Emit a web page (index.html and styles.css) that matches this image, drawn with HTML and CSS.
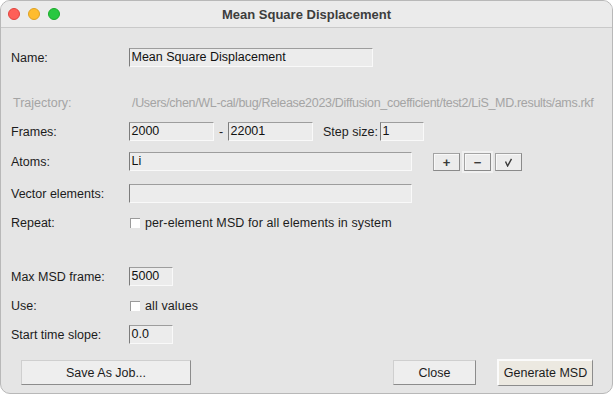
FILE: index.html
```html
<!DOCTYPE html>
<html>
<head>
<meta charset="utf-8">
<title>Mean Square Displacement</title>
<link rel="stylesheet" href="styles.css">
</head>
<body>
<div class="window">
  <div class="titlebar">
    <div class="lights">
      <span class="light red"></span>
      <span class="light yellow"></span>
      <span class="light green"></span>
    </div>
    <div class="title">Mean Square Displacement</div>
    <div></div>
  </div>
  <div class="content">
    <div class="row r-name">
      <div class="label">Name:</div>
      <div class="entry w-name">Mean Square Displacement</div>
    </div>
    <div class="row r-traj">
      <div class="label dim traj-label">Trajectory:</div>
      <div class="dim path">/Users/chen/WL-cal/bug/Release2023/Diffusion_coefficient/test2/LiS_MD.results/ams.rkf</div>
    </div>
    <div class="row r-frames">
      <div class="label">Frames:</div>
      <div class="entry w-frame">2000</div>
      <span class="dash">-</span>
      <div class="entry w-frame">22001</div>
      <span class="step">Step size:</span>
      <div class="entry w-small step-entry">1</div>
    </div>
    <div class="row r-atoms">
      <div class="label">Atoms:</div>
      <div class="entry w-wide">Li</div>
      <div class="tools">
        <div class="tbtn">+</div>
        <div class="tbtn focus">&minus;</div>
        <div class="tbtn"><svg width="9" height="9" viewBox="0 0 9 9"><path d="M1.5 3.5 L3.6 8 L7.5 0.8" fill="none" stroke="#3a3a3a" stroke-width="1.4"/></svg></div>
      </div>
    </div>
    <div class="row r-vector">
      <div class="label">Vector elements:</div>
      <div class="entry w-wide"></div>
    </div>
    <div class="row r-repeat">
      <div class="label">Repeat:</div>
      <span class="check"></span>
      <span class="check-text">per-element MSD for all elements in system</span>
    </div>
    <div class="row r-max">
      <div class="label">Max MSD frame:</div>
      <div class="entry w-small">5000</div>
    </div>
    <div class="row r-use">
      <div class="label">Use:</div>
      <span class="check"></span>
      <span class="check-text">all values</span>
    </div>
    <div class="row r-start">
      <div class="label">Start time slope:</div>
      <div class="entry w-small">0.0</div>
    </div>
    <div class="buttons">
      <div class="btn save">Save As Job...</div>
      <div class="right-btns">
        <div class="btn close">Close</div>
        <div class="btn generate">Generate MSD</div>
      </div>
    </div>
  </div>
</div>
</body>
</html>
```

FILE: styles.css
```css
html, body {
  margin: 0;
  padding: 0;
  background: #ffffff;
}
body {
  font-family: "Liberation Sans", Arial, Helvetica, sans-serif;
  font-size: 12.5px;
  color: #1c1c1c;
}
.window {
  width: 613px;
  height: 394px;
  box-sizing: border-box;
  border: 1px solid #b8b8b8;
  border-radius: 10px;
  overflow: hidden;
  background: #e5e5e5;
  display: flex;
  flex-direction: column;
}
.titlebar {
  height: 26px;
  background: #ebebeb;
  border-bottom: 1px solid #c9c9c9;
  display: grid;
  grid-template-columns: 1fr auto 1fr;
  align-items: center;
}
.lights {
  display: flex;
  gap: 8px;
  padding-left: 7px;
}
.light {
  width: 12px;
  height: 12px;
  border-radius: 50%;
  box-sizing: border-box;
}
.red { background: #fe5f57; border: 0.5px solid #e0443e; }
.yellow { background: #febc2e; border: 0.5px solid #dea123; }
.green { background: #28c840; border: 0.5px solid #1aab29; }
.title {
  font-weight: bold;
  font-size: 13px;
  color: #3d3d3d;
}
.content {
  flex: 1;
  display: flex;
  flex-direction: column;
  padding: 20px 0 0 10px;
}
.row {
  display: flex;
  align-items: center;
  height: 19px;
  margin-bottom: 10px;
}
.label {
  width: 118px;
  flex: none;
}
.dim { color: #a4a4a4; }
.traj-label { padding-left: 2px; width: 116px; }
.path {
  padding-left: 3px;
  white-space: nowrap;
  letter-spacing: -0.32px;
}
.r-name { margin-bottom: 26px; }
.r-frames { margin-bottom: 11px; }
.r-atoms { margin-bottom: 13px; }
.r-repeat { margin-bottom: 35px; }
.r-start { margin-bottom: 15px; }
.entry {
  box-sizing: border-box;
  height: 19px;
  line-height: 17px;
  background: #ececec;
  border-top: 1px solid #9d9d9d;
  border-left: 1px solid #7c7c7c;
  border-right: 1px solid #f9f9f9;
  border-bottom: 1px solid #f9f9f9;
  padding-left: 1.5px;
  white-space: nowrap;
  color: #111;
}
.w-name { width: 244px; }
.w-frame { width: 85px; }
.w-small { width: 44px; }
.w-wide { width: 283px; }
.dash { margin: 0 5px 0 5px; width: 4px; }
.step { margin-left: 10px; }
.step-entry { margin-left: 2px; }
.tools {
  display: flex;
  gap: 4px;
  margin-left: 21px;
  margin-top: 1px;
}
.tbtn {
  box-sizing: border-box;
  width: 27px;
  height: 18px;
  background: #ececec;
  border: 1px solid #a3a3a3;
  border-bottom-color: #8a8a8a;
  border-right-color: #8a8a8a;
  box-shadow: inset 1px 1px 0 #f8f8f8;
  display: flex;
  align-items: center;
  justify-content: center;
  font-weight: bold;
  font-size: 13px;
  color: #3a3a3a;
}
.tbtn.focus {
  box-shadow: inset 1px 1px 0 #f8f8f8, 0 0 0 2px #f1f1f1;
}
.check {
  width: 10px;
  height: 10px;
  box-sizing: border-box;
  background: #ffffff;
  border-top: 1px solid #9a9a9a;
  border-left: 1px solid #9a9a9a;
  margin-left: 1px;
  flex: none;
}
.check-text { margin-left: 5px; letter-spacing: 0.1px; }
.buttons {
  display: flex;
  justify-content: space-between;
  align-items: center;
  padding: 0 19px 0 10px;
}
.right-btns {
  display: flex;
  align-items: center;
  gap: 21px;
}
.btn {
  box-sizing: border-box;
  height: 25px;
  display: flex;
  align-items: center;
  justify-content: center;
  background: #eeeeee;
  border-top: 1px solid #cfcfcf;
  border-left: 1px solid #cfcfcf;
  border-right: 1px solid #8c8c8c;
  border-bottom: 1px solid #8c8c8c;
  color: #1c1c1c;
}
.save { width: 170px; }
.close { width: 83px; }
.generate {
  width: 96px;
  height: 27px;
  background: #ece9e1;
  border-top: 2px solid #fbfbfb;
  border-left: 2px solid #fbfbfb;
}
```
